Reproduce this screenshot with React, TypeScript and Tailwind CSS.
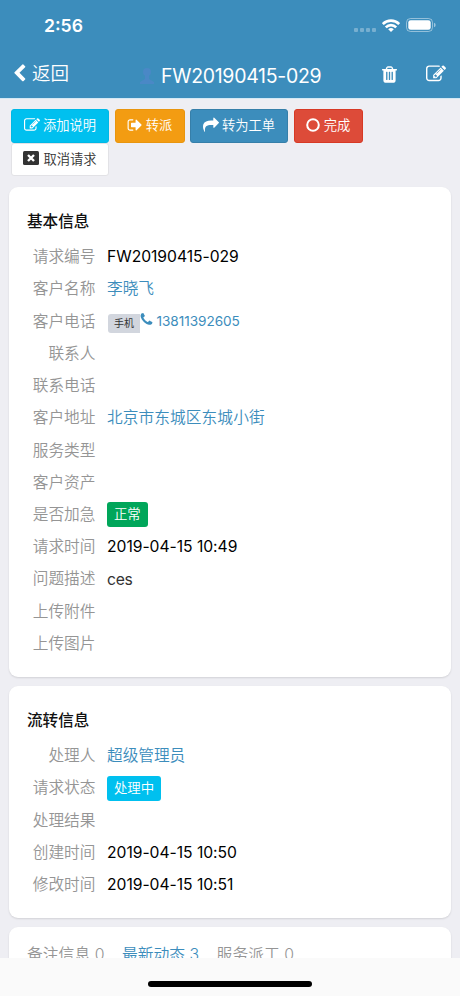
import type { ReactNode } from 'react';
import clsx from 'clsx';

// font awesome 4 glyphs, 1792 grid
const icons = {
  back: 'M1427 301l-531 531 531 531q19 19 19 45t-19 45l-166 166q-19 19-45 19t-45-19l-742-742q-19-19-19-45t19-45l742-742q19-19 45-19t45 19l166 166q19 19 19 45t-19 45z',
  trash:
    'M704 1376v-704q0-14-9-23t-23-9h-64q-14 0-23 9t-9 23v704q0 14 9 23t23 9h64q14 0 23-9t9-23zm256 0v-704q0-14-9-23t-23-9h-64q-14 0-23 9t-9 23v704q0 14 9 23t23 9h64q14 0 23-9t9-23zm256 0v-704q0-14-9-23t-23-9h-64q-14 0-23 9t-9 23v704q0 14 9 23t23 9h64q14 0 23-9t9-23zm-544-992h448l-48-117q-7-9-17-11h-317q-10 2-17 11zm928 32v64q0 14-9 23t-23 9h-96v948q0 83-47 143.5t-113 60.5h-832q-66 0-113-58.5t-47-141.5v-952h-96q-14 0-23-9t-9-23v-64q0-14 9-23t23-9h309l70-167q15-37 54-63t79-26h320q40 0 79 26t54 63l70 167h309q14 0 23 9t9 23z',
  edit: 'M888 1184l116-116-152-152-116 116v56h96v96h56zm440-720q-16-16-33 1l-350 350q-17 17-1 33t33-1l350-350q17-17 1-33zm80 594v190q0 119-84.5 203.5t-203.5 84.5h-832q-119 0-203.5-84.5t-84.5-203.5v-832q0-119 84.5-203.5t203.5-84.5h832q63 0 117 25 15 7 18 23 3 17-9 29l-49 49q-14 14-32 8-23-6-45-6h-832q-66 0-113 47t-47 113v832q0 66 47 113t113 47h832q66 0 113-47t47-113v-126q0-13 9-22l64-64q15-15 35-7t20 29zm-96-738l288 288-672 672h-288v-288zm444 132l-92 92-288-288 92-92q28-28 68-28t68 28l152 152q28 28 28 68t-28 68z',
  signOut:
    'M704 1440q0 4 1 20t.5 26.5-3 23.5-10 19.5-20.5 6.5h-320q-119 0-203.5-84.5t-84.5-203.5v-704q0-119 84.5-203.5t203.5-84.5h320q13 0 22.5 9.5t9.5 22.5q0 4 1 20t.5 26.5-3 23.5-10 19.5-20.5 6.5h-320q-66 0-113 47t-47 113v704q0 66 47 113t113 47h312l11.5 1 11.5 3 8 5.5 7 9 2 13.5zm928-544q0 26-19 45l-544 544q-19 19-45 19t-45-19-19-45v-288h-448q-26 0-45-19t-19-45v-384q0-26 19-45t45-19h448v-288q0-26 19-45t45-19 45 19l544 544q19 19 19 45z',
  share:
    'M1792 640q0 26-19 45l-512 512q-19 19-45 19t-45-19-19-45v-256h-224q-98 0-175.5 6t-154 21.5-133 42.5-105.5 69.5-80 101-48.5 138.5-17.5 181q0 55 5 123 0 6 2.5 23.5t2.5 26.5q0 15-8.5 25t-23.5 10q-16 0-28-17-7-9-13-22t-13.5-30-10.5-24q-127-285-127-451 0-199 53-333 162-403 875-403h224v-256q0-26 19-45t45-19 45 19l512 512q19 19 19 45z',
  phone:
    'M1600 1240q0 27-10 70.5t-21 68.5q-21 50-122 106-94 51-186 51-27 0-53-3.5t-57.5-12.5-47-14.5-55.5-20.5-49-18q-98-35-175-83-127-79-264-216t-216-264q-48-77-83-175-3-9-18-49t-20.5-55.5-14.5-47-12.5-57.5-3.5-53q0-92 51-186 56-101 106-122 25-11 68.5-21t70.5-10q14 0 21 3 18 6 53 76 11 19 30 54t35 63.5 31 53.5q3 4 17.5 25t21.5 35.5 7 28.5q0 20-28.5 50t-62 55-62 53-28.5 46q0 9 5 22.5t8.5 20.5 14 24 11.5 19q76 137 174 235t235 174q2 1 19 11.5t24 14 20.5 8.5 22.5 5q18 0 46-28.5t53-62 55-62 50-28.5q14 0 28.5 7t35.5 21.5 25 17.5q25 15 53.5 31t63.5 35 54 30q70 35 76 53 3 7 3 21z',
};

function Icon({ name, className }: { name: keyof typeof icons; className?: string }) {
  return (
    <svg viewBox="0 0 1792 1792" fill="currentColor" className={clsx('shrink-0', className)}>
      <path d={icons[name]} />
    </svg>
  );
}

function StatusBar() {
  return (
    <div className="flex h-[50px] items-center justify-between pt-0.5 pr-6 pl-11">
      <span className="text-[17.6px] leading-none font-semibold">2:56</span>
      <div className="-mt-0.5 flex items-center">
        <div className="mt-2.5 flex gap-[2px] opacity-30">
          <i className="size-[4px] rounded-[1px] bg-white" />
          <i className="size-[4px] rounded-[1px] bg-white" />
          <i className="size-[4px] rounded-[1px] bg-white" />
          <i className="size-[4px] rounded-[1px] bg-white" />
        </div>
        <svg viewBox="0 0 18 13" className="ml-1.5 h-[13px] w-[18px]" fill="none" stroke="white" strokeWidth="2.6">
          <path d="M.8 5a11.6 11.6 0 0 1 16.4 0" />
          <path d="M3.8 8.3a7.4 7.4 0 0 1 10.4 0" />
          <path d="M9 13L6.2 10.3a4 4 0 0 1 5.6 0z" fill="white" stroke="none" />
        </svg>
        <svg viewBox="0 0 30 14" className="ml-1.5 h-[14px] w-[30px]">
          <rect x="0.5" y="0.5" width="26" height="13" rx="4" fill="none" stroke="white" strokeOpacity="0.45" />
          <rect x="2.3" y="2.2" width="22.4" height="9.6" rx="2.4" fill="white" />
          <path d="M28 4.8a2.3 2.3 0 0 1 0 4.4z" fill="white" fillOpacity="0.5" />
        </svg>
      </div>
    </div>
  );
}

function NavBar() {
  return (
    <div className="flex h-12 items-center pr-3.5 pl-2.5">
      <div className="flex w-[130px] items-center text-[18.5px] font-[350]">
        <Icon name="back" className="-mt-0.5 size-[19px]" />
        <span className="ml-[3px]">返回</span>
      </div>
      <div className="flex flex-1 items-center">
        <svg viewBox="0 0 14 18" className="mt-1 h-[18px] w-3.5 text-[#4a88c6]" fill="currentColor">
          <circle cx="7" cy="5" r="4" />
          <path d="M5 8h4v4l5 3v2H0v-2l5-3z" />
        </svg>
        <span className="mt-1.5 ml-[7px] text-[19.5px] leading-none tracking-[-0.3px]">FW20190415-029</span>
      </div>
      <Icon name="trash" className="size-[19px]" />
      <Icon name="edit" className="ml-[27px] size-[20px]" />
    </div>
  );
}

function ActionButton({ className, children }: { className: string; children: ReactNode }) {
  return (
    <button
      className={clsx(
        'flex h-[33.5px] items-center justify-center rounded-[3px] border text-[13.3px] leading-none font-[350]',
        className
      )}
    >
      {children}
    </button>
  );
}

function Card({ title, className, children }: { title?: string; className?: string; children: ReactNode }) {
  return (
    <section className={clsx('rounded-[9px] bg-white px-[18px] shadow-[0_1px_2px_rgba(0,0,0,0.12)]', className)}>
      {title && <h2 className="flex h-[54px] items-end pb-[8px] text-[15.6px] font-medium text-[#111]">{title}</h2>}
      {children}
    </section>
  );
}

function Row({ label, children }: { label: string; children?: ReactNode }) {
  return (
    <div className="flex h-[32.22px] items-center text-[15.7px] leading-none text-black">
      <span className="w-[68.5px] text-right font-[350] text-[#959595]">{label}</span>
      <div className="ml-[11.5px] flex items-center tracking-[-0.04px]">{children}</div>
    </div>
  );
}

function Tag({ className, children }: { className: string; children: ReactNode }) {
  return (
    <span
      className={clsx(
        'flex h-[25px] items-center rounded-[3px] px-[7px] text-[13.4px] font-[350] text-white',
        className
      )}
    >
      {children}
    </span>
  );
}

export default function App() {
  return (
    <div className="flex h-[996px] w-[460px] flex-col overflow-hidden bg-[#eeeef3] font-['Inter','Noto_Sans_CJK_SC',sans-serif]">
      <header className="h-[98px] shrink-0 bg-[#3c8dbc] text-white">
        <StatusBar />
        <NavBar />
      </header>

      <main className="min-h-0 flex-1 overflow-hidden border-t border-[#d3e8f5] px-[9px] pt-[10px]">
        <div className="flex h-[78px] flex-wrap content-start gap-x-[5.5px] px-[2px]">
          <ActionButton className="w-[98px] border-[#00b8e5] bg-[#00c0ef] text-white">
            <Icon name="edit" className="-mt-0.5 mr-[3px] size-[16px]" />
            添加说明
          </ActionButton>
          <ActionButton className="w-[70px] border-[#e8950e] bg-[#f39c12] text-white">
            <Icon name="signOut" className="-mt-0.5 mr-[3px] size-[16px]" />
            转派
          </ActionButton>
          <ActionButton className="w-[98px] border-[#367fa9] bg-[#3c8dbc] text-white">
            <Icon name="share" className="-mt-0.5 mr-[3px] size-[16px]" />
            转为工单
          </ActionButton>
          <ActionButton className="w-[69px] border-[#d73925] bg-[#dd4b39] text-white">
            <svg viewBox="0 0 14 14" className="-mt-0.5 mr-1 size-[14px]" fill="none" stroke="currentColor" strokeWidth="2">
              <circle cx="7" cy="7" r="5.8" />
            </svg>
            完成
          </ActionButton>
          <ActionButton className="w-[98px] border-[#e2e2e6] bg-white text-[#333]">
            <svg viewBox="0 0 16 14" className="-mt-0.5 mr-1 h-[14px] w-[16px]">
              <rect width="16" height="14" rx="1.5" fill="#333" />
              <path d="M5 4l6 6M11 4l-6 6" stroke="white" strokeWidth="2.4" />
            </svg>
            取消请求
          </ActionButton>
        </div>

        <Card title="基本信息" className="h-[490px]">
          <Row label="请求编号">FW20190415-029</Row>
          <Row label="客户名称">
            <a className="font-[350] text-[#3c8dbc]">李晓飞</a>
          </Row>
          <Row label="客户电话">
            <span className="mt-[3px] ml-px flex h-[19px] w-8 items-center justify-center rounded-l-[3px] bg-[#d2d6de] text-[10px] text-[#333]">
              手机
            </span>
            <a className="flex items-center text-[13.6px] text-[#3c8dbc]">
              <Icon name="phone" className="-mt-1 -ml-[1.5px] size-[15px]" />
              <span className="ml-[3px]">13811392605</span>
            </a>
          </Row>
          <Row label="联系人" />
          <Row label="联系电话" />
          <Row label="客户地址">
            <a className="font-[350] tracking-[0.08px] text-[#3c8dbc]">北京市东城区东城小街</a>
          </Row>
          <Row label="服务类型" />
          <Row label="客户资产" />
          <Row label="是否加急">
            <Tag className="bg-[#00a65a]">正常</Tag>
          </Row>
          <Row label="请求时间">2019-04-15 10:49</Row>
          <Row label="问题描述">
            <span className="mt-[2px] tracking-[-0.3px] text-[#333]">ces</span>
          </Row>
          <Row label="上传附件" />
          <Row label="上传图片" />
        </Card>

        <Card title="流转信息" className="mt-[9px] h-[232px]">
          <Row label="处理人">
            <a className="font-[350] text-[#3c8dbc]">超级管理员</a>
          </Row>
          <Row label="请求状态">
            <Tag className="bg-[#00c0ef]">处理中</Tag>
          </Row>
          <Row label="处理结果" />
          <Row label="创建时间">2019-04-15 10:50</Row>
          <Row label="修改时间">2019-04-15 10:51</Row>
        </Card>

        <Card className="mt-[9px] h-[80px]">
          <div className="flex gap-[17.5px] pt-[20px] text-[15.8px] leading-none font-[350] text-[#959595]">
            <span>备注信息 0</span>
            <span className="text-[#3c8dbc]">最新动态 3</span>
            <span>服务派工 0</span>
          </div>
        </Card>
      </main>

      <footer className="flex h-[38px] shrink-0 justify-center bg-[#fafafa] pt-[23px]">
        <div className="h-[6px] w-[164px] rounded-full bg-black" />
      </footer>
    </div>
  );
}
